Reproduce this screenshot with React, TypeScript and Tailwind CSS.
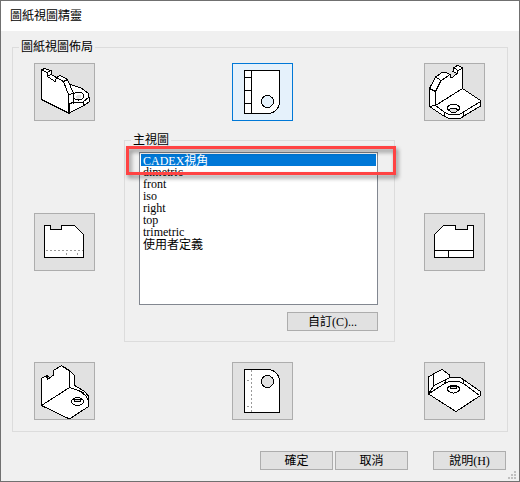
import React, { useState } from "react";

interface ViewButtonProps {
  label: string;
  active?: boolean;
  onClick: () => void;
  children: React.ReactNode;
}

function ViewButton({ label, active, onClick, children }: ViewButtonProps) {
  return (
    <button
      type="button"
      aria-label={label}
      aria-pressed={active}
      onClick={onClick}
      className={`w-[61px] h-[58px] border ${
        active ? "bg-[#e5f1fb] border-[#0078d7] text-[#e5f1fb]" : "bg-[#e1e1e1] border-[#adadad] text-[#e1e1e1]"
      }`}
    >
      <svg
        viewBox="0 0 59 56"
        className="block w-full h-full"
        fill="white"
        stroke="black"
        shapeRendering="crispEdges"
      >
        {children}
      </svg>
    </button>
  );
}

// currentColor is the button face, so holes look cut through
const views = {
  topLeft: (
    <>
      <path d="M34 20L46 24L53 29L54 33V38L48 42L34 49V31Z" />
      <path d="M54 33L48 38L38 39M48 38V42" fill="none" />
      <ellipse cx="43.5" cy="32" rx="5.5" ry="4" />
      <path d="M40 33L43 31H46V34L42 35Z" fill="currentColor" stroke="none" />
      <path d="M6.5 35.5V6L9.5 4.5L16 6.5V10.5L21.5 13.5L25 11.5L32.5 15.5L38.5 29.5V38L34.5 40V49.5Z" />
      <path d="M38.5 30V40" />
      <path d="M6.5 6L12.5 8.5L16 6.5M12.5 8.5V12.5L20 17.5L21.5 13.5L28.5 17.5L32.5 15.5M12.5 12.5L16 10.5M28.5 17.5L33.5 30.5L38.5 29.5M33.5 30.5V49" fill="none" />
    </>
  ),
  topCenter: (
    <>
      <path d="M11.5 6.5H46.5V37.5C46.5 44.5 41.5 49.5 34.5 49.5H11.5Z" />
      <path d="M18.5 6.5V49.5M11.5 13.5H18.5M11.5 26.5H18.5M11.5 39.5H18.5" />
      <circle cx="34.5" cy="37.5" r="6" fill="currentColor" />
    </>
  ),
  topRight: (
    <>
      <path d="M4.5 42.5V24.5L10.5 13L17 8.5H21L25 10.5V13.5L28 13L32 9.5L28 7.5L29 3.5L32.5 1.5L37.5 3.5V24.5L55.5 36.5V42L39 52L35 54.5H24L19.5 52.5Z" />
      <path d="M10.5 41.5V27.5L16 16.5L24 11.5M4.5 24.5L10.5 27.5M10.5 13L16 16.5M29 3.5L32.5 6.5L37.5 4.5M32.5 6.5L32 9.5M10.5 41.5L37.5 24.5M10.5 41.5L20 48.5L24 50.5H34L38.5 48L55.5 37.5M19.5 48.5V52.5M38.5 48V52M4.5 42.5L10.5 41.5" fill="none" />
      <ellipse cx="28.5" cy="44" rx="6" ry="4" />
      <path d="M24 46L26 44.5H31L33 46L31 48H26Z" fill="currentColor" />
    </>
  ),
  middleLeft: (
    <>
      <path d="M9.5 11.5H15.5V15.5H26.5V11.5H39.5L48.5 20.5V43.5H9.5Z" />
      <path d="M11 36.5H48" stroke="#999" strokeDasharray="2 2" />
      <path d="M31.5 39V41M42.5 39V41" stroke="#999" />
    </>
  ),
  middleRight: (
    <>
      <path d="M9.5 20.5L18.5 11.5H30.5V15.5H42.5V11.5H48.5V43.5H9.5Z" />
      <path d="M9.5 36.5H48.5M23.5 36.5V43.5" />
    </>
  ),
  bottomLeft: (
    <>
      <path d="M6.5 15.5L11.5 12.5L12.5 16.5L18.5 12V7.5L26.5 2.5L34.5 7.5L39.5 12.5V22.5L49 28L53.5 33V43.5L34.5 56L6.5 42.5Z" />
      <path d="M34.5 7.5V24.5L6.5 42.5M26.5 2.5L38 10.5M34.5 24.5L46 28.5L51 33L53.5 38M48.5 28.5V32M11.5 12.5L15 14.5" fill="none" />
      <ellipse cx="42.5" cy="38.5" rx="6" ry="4" />
      <path d="M39 36.5H46L45 38.5H40Z" fill="currentColor" />
    </>
  ),
  bottomCenter: (
    <>
      <path d="M11.5 6.5H34.5C41.5 6.5 46.5 11.5 46.5 18.5V49.5H11.5Z" />
      <path d="M18.5 7V49" stroke="#999" strokeDasharray="2 2" />
      <path d="M14 17.5H16M14 43.5H16" stroke="#999" />
      <circle cx="34.5" cy="18.5" r="6" fill="currentColor" />
    </>
  ),
  bottomRight: (
    <>
      <path d="M3.5 31V14L8.5 11L17 6.5L24.5 12V14.5H35L39 17L55.5 28.5V32.5L31 48.5Z" />
      <path d="M8.5 11V23M8.5 23L3.5 31L19.5 20.5L20.5 17L24.5 14.5M8.5 23L19.5 17M19.5 20.5L24 18.5H34L38.5 20.5L54.5 32.5M38.5 17V20.5" fill="none" />
      <ellipse cx="28.5" cy="26" rx="6" ry="4" />
      <path d="M25 23.5H32L31 25.5H26Z" fill="currentColor" />
    </>
  ),
};

const mainViews = ["CADEX視角", "dimetric", "front", "iso", "right", "top", "trimetric", "使用者定義"];

const pushButton = "h-[19px] border border-[#adadad] bg-[#e1e1e1] leading-4 text-center";

export default function App() {
  const [active, setActive] = useState("topCenter");
  const [mainView, setMainView] = useState(mainViews[0]);

  return (
    <main className="relative w-full border border-[#707070] bg-[#f0f0f0] text-black text-[12px] leading-4 font-['Liberation_Serif','Noto_Sans_CJK_TC',serif]">
      <header className="h-[30px] px-[9px] flex items-center bg-white">
        <h1>圖紙視圖精靈</h1>
      </header>

      <div className="pt-2 px-[11px]">
        <fieldset className="min-w-0 border border-[#dcdcdc]">
          <legend className="ml-1.5 px-0.5">圖紙視圖佈局</legend>
          <div className="grid grid-cols-[61px_1fr_61px] gap-x-[29px] gap-y-5 items-center pt-2 pb-[11px] pl-[21px] pr-[22px]">
            <ViewButton label="左上" active={active === "topLeft"} onClick={() => setActive("topLeft")}>
              {views.topLeft}
            </ViewButton>
            <div className="flex justify-center pl-1.5">
              <ViewButton label="上" active={active === "topCenter"} onClick={() => setActive("topCenter")}>
                {views.topCenter}
              </ViewButton>
            </div>
            <ViewButton label="右上" active={active === "topRight"} onClick={() => setActive("topRight")}>
              {views.topRight}
            </ViewButton>

            <ViewButton label="左" active={active === "middleLeft"} onClick={() => setActive("middleLeft")}>
              {views.middleLeft}
            </ViewButton>
            <fieldset className="min-w-0 -mt-[9px] border border-[#dcdcdc]">
              <legend className="ml-1.5 px-0.5">
                <label htmlFor="main-view">主視圖</label>
              </legend>
              <div className="flex flex-col gap-[7px] pt-1 pb-2.5 pl-3.5 pr-4">
                <div className="relative">
                  <select
                    id="main-view"
                    size={8}
                    value={mainView}
                    onChange={(e) => setMainView(e.target.value)}
                    className="block w-full h-[153px] p-px border border-[#828790] rounded-none bg-white overflow-hidden outline-none"
                  >
                    {mainViews.map((name) => (
                      <option
                        key={name}
                        value={name}
                        className="flex items-center h-3 min-h-0 p-0 pl-0.5 leading-3 overflow-visible checked:bg-[linear-gradient(#0078d7,#0078d7)] checked:[-webkit-text-fill-color:white]"
                      >
                        {name}
                      </option>
                    ))}
                  </select>
                  <div className="absolute -top-1.5 -left-[13px] -right-[18px] h-[29px] border-3 border-[#ff4343] drop-shadow-[2px_3px_2px_rgba(0,0,0,0.45)] pointer-events-none" />
                </div>
                <button type="button" className={`${pushButton} w-[91px] self-end`}>
                  自訂(C)...
                </button>
              </div>
            </fieldset>
            <ViewButton label="右" active={active === "middleRight"} onClick={() => setActive("middleRight")}>
              {views.middleRight}
            </ViewButton>

            <ViewButton label="左下" active={active === "bottomLeft"} onClick={() => setActive("bottomLeft")}>
              {views.bottomLeft}
            </ViewButton>
            <div className="flex justify-center pl-1.5">
              <ViewButton label="下" active={active === "bottomCenter"} onClick={() => setActive("bottomCenter")}>
                {views.bottomCenter}
              </ViewButton>
            </div>
            <ViewButton label="右下" active={active === "bottomRight"} onClick={() => setActive("bottomRight")}>
              {views.bottomRight}
            </ViewButton>
          </div>
        </fieldset>
      </div>

      <footer className="flex justify-end pt-[19px] pb-[11px] pr-[13px]">
        <button type="button" className={`${pushButton} w-[73px] mr-0.5`}>確定</button>
        <button type="button" className={`${pushButton} w-[73px] mr-[25px]`}>取消</button>
        <button type="button" className={`${pushButton} w-[73px]`}>說明(H)</button>
      </footer>

      {/* resize grip */}
      <svg viewBox="0 0 8 8" className="absolute right-[3px] bottom-0.5 w-2 h-2" fill="#bfbfbf" shapeRendering="crispEdges">
        <path d="M6 0h2v2h-2zM3 3h2v2h-2zM6 3h2v2h-2zM0 6h2v2h-2zM3 6h2v2h-2zM6 6h2v2h-2z" />
      </svg>
    </main>
  );
}
